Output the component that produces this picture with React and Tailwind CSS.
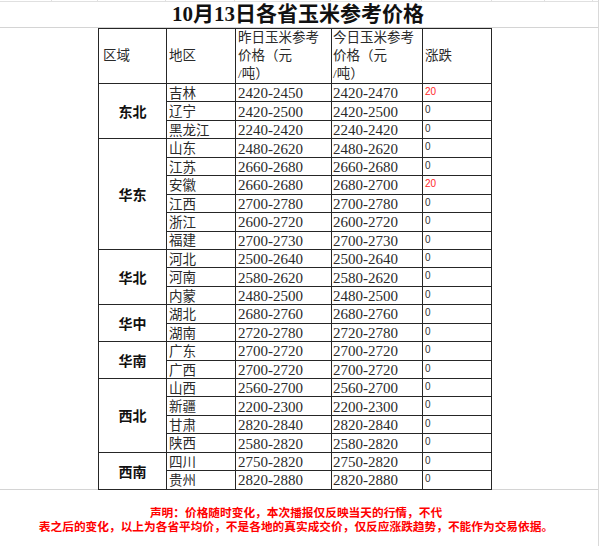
import React from "react";

const regions = [
  {
    name: "东北",
    rows: [
      ["吉林", "2420-2450", "2420-2470", "20"],
      ["辽宁", "2420-2500", "2420-2500", "0"],
      ["黑龙江", "2240-2420", "2240-2420", "0"],
    ],
  },
  {
    name: "华东",
    rows: [
      ["山东", "2480-2620", "2480-2620", "0"],
      ["江苏", "2660-2680", "2660-2680", "0"],
      ["安徽", "2660-2680", "2680-2700", "20"],
      ["江西", "2700-2780", "2700-2780", "0"],
      ["浙江", "2600-2720", "2600-2720", "0"],
      ["福建", "2700-2730", "2700-2730", "0"],
    ],
  },
  {
    name: "华北",
    rows: [
      ["河北", "2500-2640", "2500-2640", "0"],
      ["河南", "2580-2620", "2580-2620", "0"],
      ["内蒙", "2480-2500", "2480-2500", "0"],
    ],
  },
  {
    name: "华中",
    rows: [
      ["湖北", "2680-2760", "2680-2760", "0"],
      ["湖南", "2720-2780", "2720-2780", "0"],
    ],
  },
  {
    name: "华南",
    rows: [
      ["广东", "2700-2720", "2700-2720", "0"],
      ["广西", "2700-2720", "2700-2720", "0"],
    ],
  },
  {
    name: "西北",
    rows: [
      ["山西", "2560-2700", "2560-2700", "0"],
      ["新疆", "2200-2300", "2200-2300", "0"],
      ["甘肃", "2820-2840", "2820-2840", "0"],
      ["陕西", "2580-2820", "2580-2820", "0"],
    ],
  },
  {
    name: "西南",
    rows: [
      ["四川", "2750-2820", "2750-2820", "0"],
      ["贵州", "2820-2880", "2820-2880", "0"],
    ],
  },
];

const spans = {
  2: "row-span-2",
  3: "row-span-3",
  4: "row-span-4",
  6: "row-span-6",
};

const cell = "border-r border-b border-[#262626] flex items-center";

const App = () => {
  return (
    <div className="w-[599px] h-[546px] bg-white border-r border-[#d9d9d9] overflow-hidden font-['Liberation_Serif','Noto_Sans_CJK_SC',serif] text-[#2a2a2a]">
      {/* spreadsheet row above */}
      <div className="flex h-[2px] border-b border-[#e0e0e0]">
        <div className="w-[52px] border-r border-[#e0e0e0]" />
        <div className="w-[46px] border-r border-[#e0e0e0]" />
        <div className="w-[68px] border-r border-[#e0e0e0]" />
        <div className="w-[69px] border-r border-[#e0e0e0]" />
        <div className="w-[96px] border-r border-[#e0e0e0]" />
        <div className="w-[91px] border-r border-[#e0e0e0]" />
        <div className="w-[70px] border-r border-[#e0e0e0]" />
        <div className="w-[53px] border-r border-[#e0e0e0]" />
        <div className="w-[48px] border-r border-[#e0e0e0]" />
      </div>

      {/* title */}
      <div className="flex h-[26px] border-b border-[#d4d4d4]">
        <div className="w-[98px]" />
        <div className="w-[400px] text-center font-bold text-[21px] leading-[24px] text-[#111]">
          10月13日各省玉米参考价格
        </div>
      </div>

      {/* table */}
      <div className="flex">
        <div className="w-[98px] border-b border-[#d4d4d4]" />
        <div className="grid grid-cols-[68px_69px_96px_91px_69px] grid-rows-[55px_repeat(22,18.45px)] border-l border-t border-[#262626] text-[13.5px]">
          <div className={`${cell} pl-[4px]`}>区域</div>
          <div className={`${cell} pl-[2px]`}>地区</div>
          <div className={`${cell} pl-[2px] leading-[18px]`}>
            <span>
              昨日玉米参考
              <br />
              价格（元
              <br />
              /吨）
            </span>
          </div>
          <div className={`${cell} pl-[1px] leading-[18px]`}>
            <span>
              今日玉米参考
              <br />
              价格（元
              <br />
              /吨）
            </span>
          </div>
          <div className={`${cell} pl-[2px]`}>涨跌</div>

          {regions.map((r) => (
            <React.Fragment key={r.name}>
              <div
                className={`${cell} ${spans[r.rows.length]} justify-center pt-[3px] font-bold text-[14px] text-[#111]`}
              >
                {r.name}
              </div>
              {r.rows.map((row) => (
                <React.Fragment key={row[0]}>
                  <div className={`${cell} pl-[2px] pt-[2px] leading-none`}>
                    {row[0]}
                  </div>
                  <div className={`${cell} pl-[2px] pt-[2px] text-[15px] leading-none`}>
                    {row[1]}
                  </div>
                  <div className={`${cell} pl-[1px] pt-[2px] text-[15px] leading-none`}>
                    {row[2]}
                  </div>
                  <div
                    className={`border-r border-b border-[#262626] pl-[2px] pt-[3px] font-['Liberation_Sans',sans-serif] text-[10px] leading-none ${
                      row[3] === "20" ? "text-[#ff2a2a]" : "text-[#333]"
                    }`}
                  >
                    {row[3]}
                  </div>
                </React.Fragment>
              ))}
            </React.Fragment>
          ))}
        </div>
        <div className="flex-1 border-b border-[#d4d4d4]" />
      </div>

      {/* notice */}
      <div className="pt-[15px] pr-[6px] text-center font-['Noto_Sans_CJK_SC',sans-serif] font-bold text-[11.7px] leading-[14px] text-[#ff0000]">
        声明：价格随时变化，本次播报仅反映当天的行情，不代
        <br />
        表之后的变化，以上为各省平均价，不是各地的真实成交价，仅反应涨跌趋势，不能作为交易依据。
      </div>
    </div>
  );
};

export default App;
